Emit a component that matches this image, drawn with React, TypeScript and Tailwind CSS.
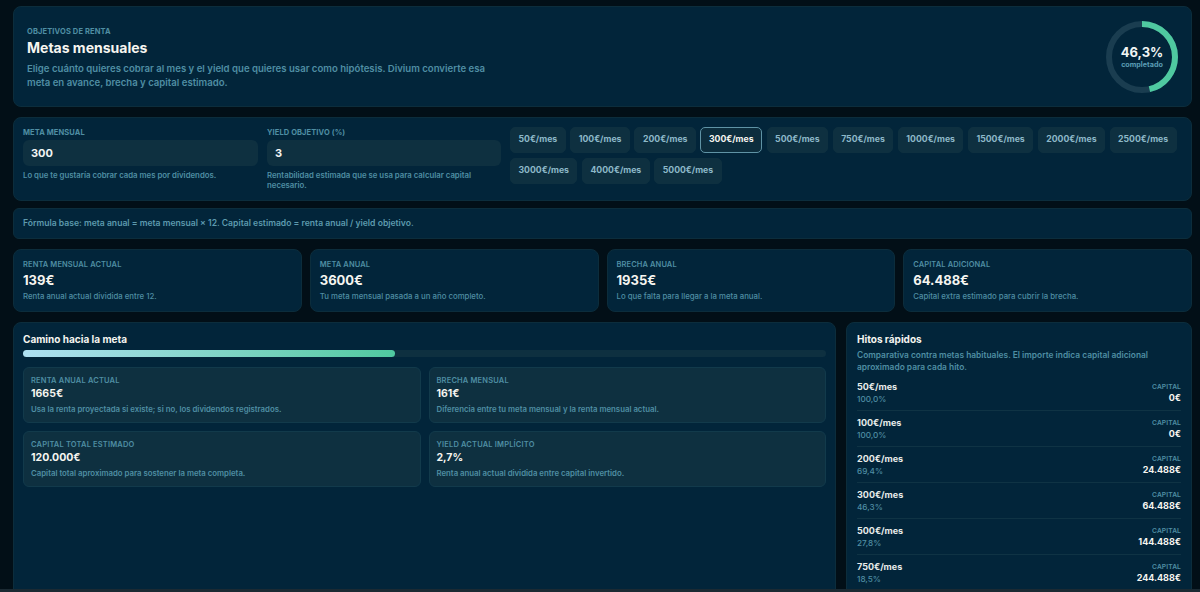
const chips = ["50€/mes", "100€/mes", "200€/mes", "300€/mes", "500€/mes", "750€/mes", "1000€/mes", "1500€/mes", "2000€/mes", "2500€/mes", "3000€/mes", "4000€/mes", "5000€/mes"];

const stats = [
  { label: "RENTA MENSUAL ACTUAL", value: "139€", note: "Renta anual actual dividida entre 12." },
  { label: "META ANUAL", value: "3600€", note: "Tu meta mensual pasada a un año completo." },
  { label: "BRECHA ANUAL", value: "1935€", note: "Lo que falta para llegar a la meta anual." },
  { label: "CAPITAL ADICIONAL", value: "64.488€", note: "Capital extra estimado para cubrir la brecha." },
];

const details = [
  { label: "RENTA ANUAL ACTUAL", value: "1665€", note: "Usa la renta proyectada si existe; si no, los dividendos registrados." },
  { label: "BRECHA MENSUAL", value: "161€", note: "Diferencia entre tu meta mensual y la renta mensual actual." },
  { label: "CAPITAL TOTAL ESTIMADO", value: "120.000€", note: "Capital total aproximado para sostener la meta completa." },
  { label: "YIELD ACTUAL IMPLÍCITO", value: "2,7%", note: "Renta anual actual dividida entre capital invertido." },
];

const hitos = [
  { name: "50€/mes", pct: "100,0%", capital: "0€" },
  { name: "100€/mes", pct: "100,0%", capital: "0€" },
  { name: "200€/mes", pct: "69,4%", capital: "24.488€" },
  { name: "300€/mes", pct: "46,3%", capital: "64.488€" },
  { name: "500€/mes", pct: "27,8%", capital: "144.488€" },
  { name: "750€/mes", pct: "18,5%", capital: "244.488€" },
];

function Field({ label, value, note }: { label: string; value: string; note: string }) {
  return (
    <div>
      <div className="text-[7.5px] font-bold tracking-[0.1px] leading-[12px] text-[#4f8ea3]">{label}</div>
      <div className="mt-[1px] h-[26px] rounded-[6px] bg-[#0e3040] px-2 flex items-center text-[11px] font-bold text-[#f1f5f4]">{value}</div>
      <div className="mt-[4px] text-[7.8px] font-semibold leading-[10px] text-[#4f8ea3]">{note}</div>
    </div>
  );
}

function Ring() {
  return (
    <div className="relative w-[72px] h-[72px] shrink-0">
      <svg viewBox="0 0 72 72" className="w-full h-full -rotate-90">
        <circle cx="36" cy="36" r="33" fill="none" stroke="#1a3d50" strokeWidth="6" />
        <circle cx="36" cy="36" r="33" fill="none" stroke="#4fc9a0" strokeWidth="6" strokeDasharray="96 112" />
      </svg>
      <div className="absolute inset-0 flex flex-col items-center justify-center">
        <div className="text-[13px] font-bold leading-[16px] text-[#f1f5f4]">46,3%</div>
        <div className="text-[7.2px] font-bold leading-[10px] text-[#5a9db5]">completado</div>
      </div>
    </div>
  );
}

export default function App() {
  return (
    <div className="h-[592px] overflow-hidden bg-[#020f17] pl-[13px] pr-2 pt-[6px] font-['Inter',sans-serif] relative">
      <section className="h-[101px] rounded-[8px] border border-[#0c2d3c] bg-[#02253a] flex items-center justify-between pl-[13px] pr-[13px]">
        <div className="w-[480px] pt-[2px]">
          <div className="text-[7.5px] font-bold tracking-[0.13px] leading-[11px] text-[#4f8ea3]">OBJETIVOS DE RENTA</div>
          <h1 className="mt-[1px] text-[14px] font-bold leading-[20px] text-[#f6f5f0]">Metas mensuales</h1>
          <p className="mt-[4px] text-[9.6px] font-semibold leading-[14px] text-[#4f8ea3]">Elige cuánto quieres cobrar al mes y el yield que quieres usar como hipótesis. Divium convierte esa meta en avance, brecha y capital estimado.</p>
        </div>
        <Ring />
      </section>

      <section className="mt-[10px] h-[84px] rounded-[8px] border border-[#0c2d3c] bg-[#02253a] p-[9px] grid grid-cols-[235px_234px_1fr] gap-[9px]">
        <Field label="META MENSUAL" value="300" note="Lo que te gustaría cobrar cada mes por dividendos." />
        <Field label="YIELD OBJETIVO (%)" value="3" note="Rentabilidad estimada que se usa para calcular capital necesario." />
        <div className="flex flex-wrap content-start gap-x-[4.5px] gap-y-[5px]">
          {chips.map((c) => (
            <span
              key={c}
              className={
                c === "300€/mes"
                  ? "h-[26px] px-[7.5px] flex items-center rounded-[5px] border border-[#5f93a5] bg-[#0c2d3d] text-[8.7px] font-bold text-[#f6f5f0]"
                  : "h-[26px] px-[7.5px] flex items-center rounded-[5px] border border-[#0e3040] bg-[#0e3040] text-[8.7px] font-bold text-[#8db8c8]"
              }
            >
              {c}
            </span>
          ))}
        </div>
      </section>

      <section className="mt-[7px] h-[31px] rounded-[6px] border border-[#0c2d3c] bg-[#02253a] px-[9px] flex items-center text-[8.6px] font-semibold text-[#5d9aae]">
        Fórmula base: meta anual = meta mensual × 12. Capital estimado = renta anual / yield objetivo.
      </section>

      <section className="mt-[10px] grid grid-cols-4 gap-2">
        {stats.map((s) => (
          <div key={s.label} className="h-[63px] rounded-[8px] border border-[#0c2d3c] bg-[#02253a] px-[9px] pt-[9px]">
            <div className="text-[7.5px] font-semibold tracking-[0.1px] leading-[11px] text-[#4f8ea3]">{s.label}</div>
            <div className="mt-[1px] text-[13px] font-bold leading-[18px] text-[#f6f5f0]">{s.value}</div>
            <div className="mt-[2px] text-[7.8px] font-medium leading-[11px] text-[#4f8ea3]">{s.note}</div>
          </div>
        ))}
      </section>

      <section className="mt-[10px] grid grid-cols-[823px_1fr] gap-[10px] h-[320px]">
        <div className="rounded-[8px] border border-[#0c2d3c] bg-[#02253a] px-[9px] pt-[9px]">
          <h2 className="text-[10px] font-bold leading-[14px] text-[#f6f5f0]">Camino hacia la meta</h2>
          <div className="mt-[4px] h-[7px] rounded-full bg-[#0e3040]">
            <div className="h-full w-[46.3%] rounded-full bg-gradient-to-r from-[#aee0f2] to-[#4fc9a0]" />
          </div>
          <div className="mt-[10px] grid grid-cols-2 gap-2">
            {details.map((d) => (
              <div key={d.label} className="h-[56px] rounded-[6px] border border-[#123a4b] bg-[#0e3040] px-[7px] pt-[7px]">
                <div className="text-[7.5px] font-semibold tracking-[0.17px] leading-[11px] text-[#4f8ea3]">{d.label}</div>
                <div className="text-[10.5px] font-bold leading-[16px] text-[#f6f5f0]">{d.value}</div>
                <div className="mt-[1px] text-[7.8px] font-semibold leading-[12px] text-[#4f8ea3]">{d.note}</div>
              </div>
            ))}
          </div>
        </div>

        <div className="rounded-[8px] border border-[#0c2d3c] bg-[#02253a] px-[10px] pt-[9px]">
          <h2 className="text-[10px] font-bold leading-[14px] text-[#f6f5f0]">Hitos rápidos</h2>
          <p className="mt-[3px] text-[8.4px] font-semibold leading-[12px] text-[#4f8ea3]">Comparativa contra metas habituales. El importe indica capital adicional aproximado para cada hito.</p>
          <div className="mt-[2px]">
            {hitos.map((h) => (
              <div key={h.name} className="h-[36px] flex justify-between items-center border-b border-[#0f3344]">
                <div>
                  <div className="text-[9px] font-bold leading-[13px] text-[#e8ecea]">{h.name}</div>
                  <div className="text-[8.2px] font-medium leading-[12px] text-[#4f8ea3]">{h.pct}</div>
                </div>
                <div className="text-right">
                  <div className="text-[6.7px] font-semibold tracking-[0.1px] leading-[10px] text-[#4f8ea3]">CAPITAL</div>
                  <div className="text-[9px] font-bold leading-[11px] text-[#f6f5f0]">{h.capital}</div>
                </div>
              </div>
            ))}
          </div>
        </div>
      </section>
      <div className="absolute left-0 right-0 bottom-0 h-[3px] bg-[#1b2a33]" />
    </div>
  );
}
